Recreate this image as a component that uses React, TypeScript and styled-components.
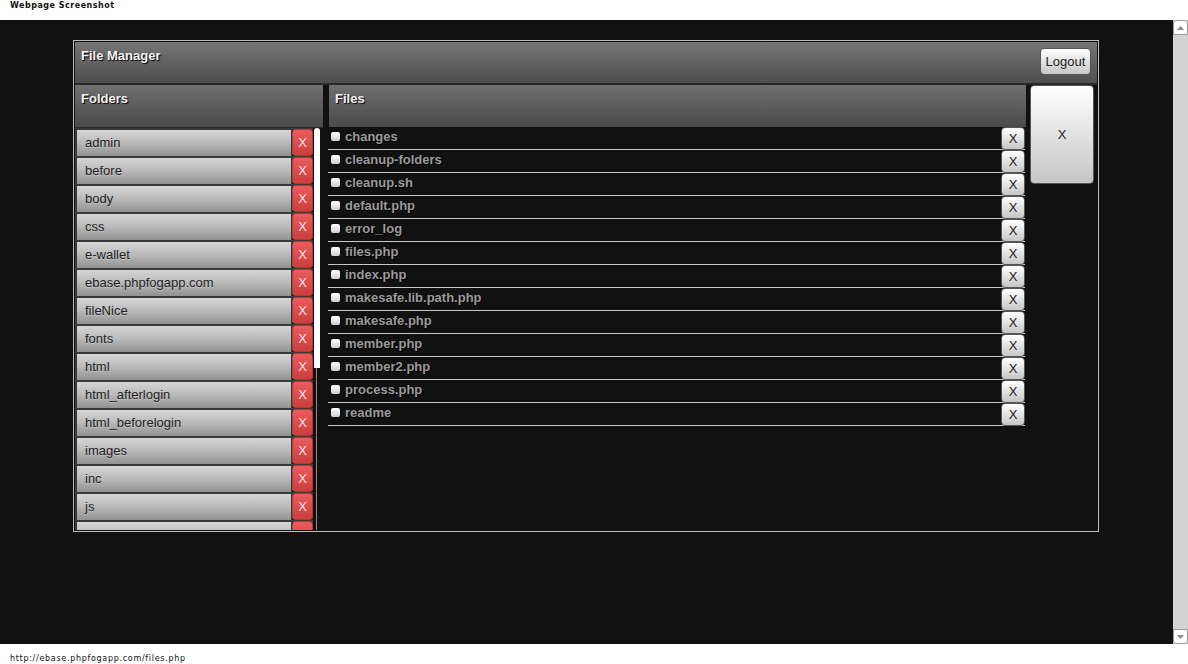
import React from "react";
import styled, { createGlobalStyle } from "styled-components";

const Global = createGlobalStyle`
  html, body { margin: 0; padding: 0; background: #fff; }
  body { font-family: "Liberation Sans", Arial, sans-serif; }
  * { box-sizing: border-box; }
`;

const Page = styled.div`
  width: 1188px;
  height: 664px;
  display: flex;
  flex-direction: column;
  overflow: hidden;
`;

const InfoBar = styled.div<{ $bottom?: boolean }>`
  height: 20px;
  background: #fff;
  display: flex;
  align-items: ${(p) => (p.$bottom ? "flex-end" : "flex-start")};
  padding: ${(p) => (p.$bottom ? "0 0 1px 10px" : "1px 0 0 10px")};
  font-family: "DejaVu Sans", sans-serif;
  font-size: 8px;
  letter-spacing: ${(p) => (p.$bottom ? "0.7px" : "0.5px")};
  color: #111;
  font-weight: ${(p) => (p.$bottom ? "normal" : "600")};
`;

const Middle = styled.div`
  height: 624px;
  display: flex;
`;

const Viewport = styled.div`
  flex: 1;
  background: #111;
  padding: 20px 0 0 73px;
`;

const ScrollBar = styled.div`
  width: 15px;
  background: #d3d3d3;
  display: flex;
  flex-direction: column;
  justify-content: space-between;
`;

const ScrollBtn = styled.div<{ $down?: boolean }>`
  height: 15px;
  background: #fff;
  border: 1px solid #9a9a9a;
  border-radius: ${(p) => (p.$down ? "0 0 3px 3px" : "3px 3px 0 0")};
  display: flex;
  align-items: center;
  justify-content: center;
`;

const Panel = styled.div`
  width: 1026px;
  height: 492px;
  border: 1px solid #bdbdbd;
  padding: 1px;
  background: #111;
  display: flex;
  flex-direction: column;
`;

const Header = styled.div`
  height: 43px;
  background: linear-gradient(#767676, #4e4e4e);
  border-bottom: 2px solid #2a2a2a;
  display: flex;
  justify-content: space-between;
  align-items: flex-start;
  padding: 6px 6px 0 6px;
`;

const Title = styled.div`
  font-weight: bold;
  font-size: 13px;
  line-height: 14px;
  color: #f2f2f2;
  text-shadow: 1px 1px 1px #000;
  padding-top: 1px;
`;

const LightButton = styled.button<{ $w: number; $h: number }>`
  font-family: "Liberation Sans", Arial, sans-serif;
  font-size: 13px;
  color: #222;
  background: linear-gradient(#ffffff, #c6c6c6);
  border: 1px solid #555;
  border-radius: 4px;
  padding: 0;
  margin: 0;
  display: flex;
  align-items: center;
  justify-content: center;
  cursor: pointer;
  width: ${(p) => p.$w}px;
  height: ${(p) => p.$h}px;
  flex-shrink: 0;
`;

const Body = styled.div`
  flex: 1;
  display: flex;
  min-height: 0;
`;

const FolderCol = styled.div`
  width: 248px;
  display: flex;
  flex-direction: column;
`;

const ColHeader = styled.div`
  height: 43px;
  background: linear-gradient(#707070, #4a4a4a);
  border-bottom: 1px solid #2a2a2a;
  padding: 6px 6px 0 6px;
`;

const FolderArea = styled.div`
  flex: 1;
  display: flex;
  overflow: hidden;
  min-height: 0;
`;

const FolderList = styled.div`
  width: 239px;
  display: flex;
  flex-direction: column;
`;

const FolderItem = styled.div`
  height: 28px;
  flex-shrink: 0;
  display: flex;
  border-top: 2px solid #3a3a3a;
  border-left: 2px solid #3a3a3a;
`;

const FolderName = styled.div`
  flex: 1;
  background: linear-gradient(#d6d6d6 0%, #bcbcbc 45%, #929292 100%);
  border-right: 1px solid #3a3a3a;
  font-size: 13px;
  color: #222;
  text-shadow: 0 1px 0 rgba(255, 255, 255, 0.25);
  padding: 0 0 2px 8px;
  display: flex;
  align-items: center;
`;

const RedButton = styled.button`
  width: 21px;
  height: 27px;
  margin-top: -1px;
  background: linear-gradient(#e85d5d, #cc3e3e);
  border: 1px solid #b83535;
  border-radius: 3px;
  color: #fbe3e3;
  font-family: "Liberation Sans", Arial, sans-serif;
  font-size: 13px;
  padding: 0;
  display: flex;
  align-items: center;
  justify-content: center;
  flex-shrink: 0;
`;

const ScrollTrack = styled.div`
  width: 6px;
  margin: 0 3px 0 1px;
  display: flex;
  flex-direction: column;
`;

const ScrollThumb = styled.div`
  height: 240px;
  background: #fff;
  border-radius: 3px 3px 0 0;
`;

const TrackLine = styled.div`
  flex: 1;
  margin-left: 2px;
  width: 1px;
  background: #8a8a8a;
`;

const FilesCol = styled.div`
  width: 698px;
  margin-left: 5px;
  display: flex;
  flex-direction: column;
`;

const FilesHeader = styled(ColHeader)`
  height: 42px;
  margin-left: 1px;
  border-bottom: none;
`;

const FileRow = styled.div`
  height: 23px;
  border-bottom: 1px solid #c8c8c8;
  display: flex;
  align-items: flex-start;
  margin-right: 1px;
`;

const FileName = styled.div`
  display: flex;
  align-items: center;
  gap: 5px;
  padding: 0 0 0 3px;
  height: 19px;
  font-weight: bold;
  font-size: 13px;
  color: #9a9a9a;
  text-shadow: 1px 1px 1px #000;
  flex: 1;
`;

const Check = styled.span`
  width: 9px;
  height: 9px;
  border-radius: 2px;
  background: linear-gradient(#ffffff, #cfcfcf);
  display: inline-block;
`;

const SideCol = styled.div`
  margin-left: 4px;
`;

const folders = [
  "admin",
  "before",
  "body",
  "css",
  "e-wallet",
  "ebase.phpfogapp.com",
  "fileNice",
  "fonts",
  "html",
  "html_afterlogin",
  "html_beforelogin",
  "images",
  "inc",
  "js",
];

const files = [
  "changes",
  "cleanup-folders",
  "cleanup.sh",
  "default.php",
  "error_log",
  "files.php",
  "index.php",
  "makesafe.lib.path.php",
  "makesafe.php",
  "member.php",
  "member2.php",
  "process.php",
  "readme",
];

const Arrow = ({ down }: { down?: boolean }) => (
  <svg width="7" height="4" viewBox="0 0 7 4">
    <polygon points={down ? "0,0 7,0 3.5,4" : "0,4 7,4 3.5,0"} fill="#8a8a8a" />
  </svg>
);

export default function App() {
  return (
    <Page>
      <Global />
      <InfoBar>Webpage Screenshot</InfoBar>
      <Middle>
        <Viewport>
          <Panel>
            <Header>
              <Title>File Manager</Title>
              <LightButton $w={51} $h={27}>Logout</LightButton>
            </Header>
            <Body>
              <FolderCol>
                <ColHeader>
                  <Title>Folders</Title>
                </ColHeader>
                <FolderArea>
                  <FolderList>
                    {folders.map((f) => (
                      <FolderItem key={f}>
                        <FolderName>{f}</FolderName>
                        <RedButton>X</RedButton>
                      </FolderItem>
                    ))}
                    <FolderItem>
                      <FolderName />
                      <RedButton />
                    </FolderItem>
                  </FolderList>
                  <ScrollTrack>
                    <ScrollThumb />
                    <TrackLine />
                  </ScrollTrack>
                </FolderArea>
              </FolderCol>
              <FilesCol>
                <FilesHeader>
                  <Title>Files</Title>
                </FilesHeader>
                {files.map((f) => (
                  <FileRow key={f}>
                    <FileName>
                      <Check />
                      {f}
                    </FileName>
                    <LightButton $w={24} $h={23}>X</LightButton>
                  </FileRow>
                ))}
              </FilesCol>
              <SideCol>
                <LightButton $w={64} $h={99}>X</LightButton>
              </SideCol>
            </Body>
          </Panel>
        </Viewport>
        <ScrollBar>
          <ScrollBtn>
            <Arrow />
          </ScrollBtn>
          <ScrollBtn $down>
            <Arrow down />
          </ScrollBtn>
        </ScrollBar>
      </Middle>
      <InfoBar $bottom>http://ebase.phpfogapp.com/files.php</InfoBar>
    </Page>
  );
}
